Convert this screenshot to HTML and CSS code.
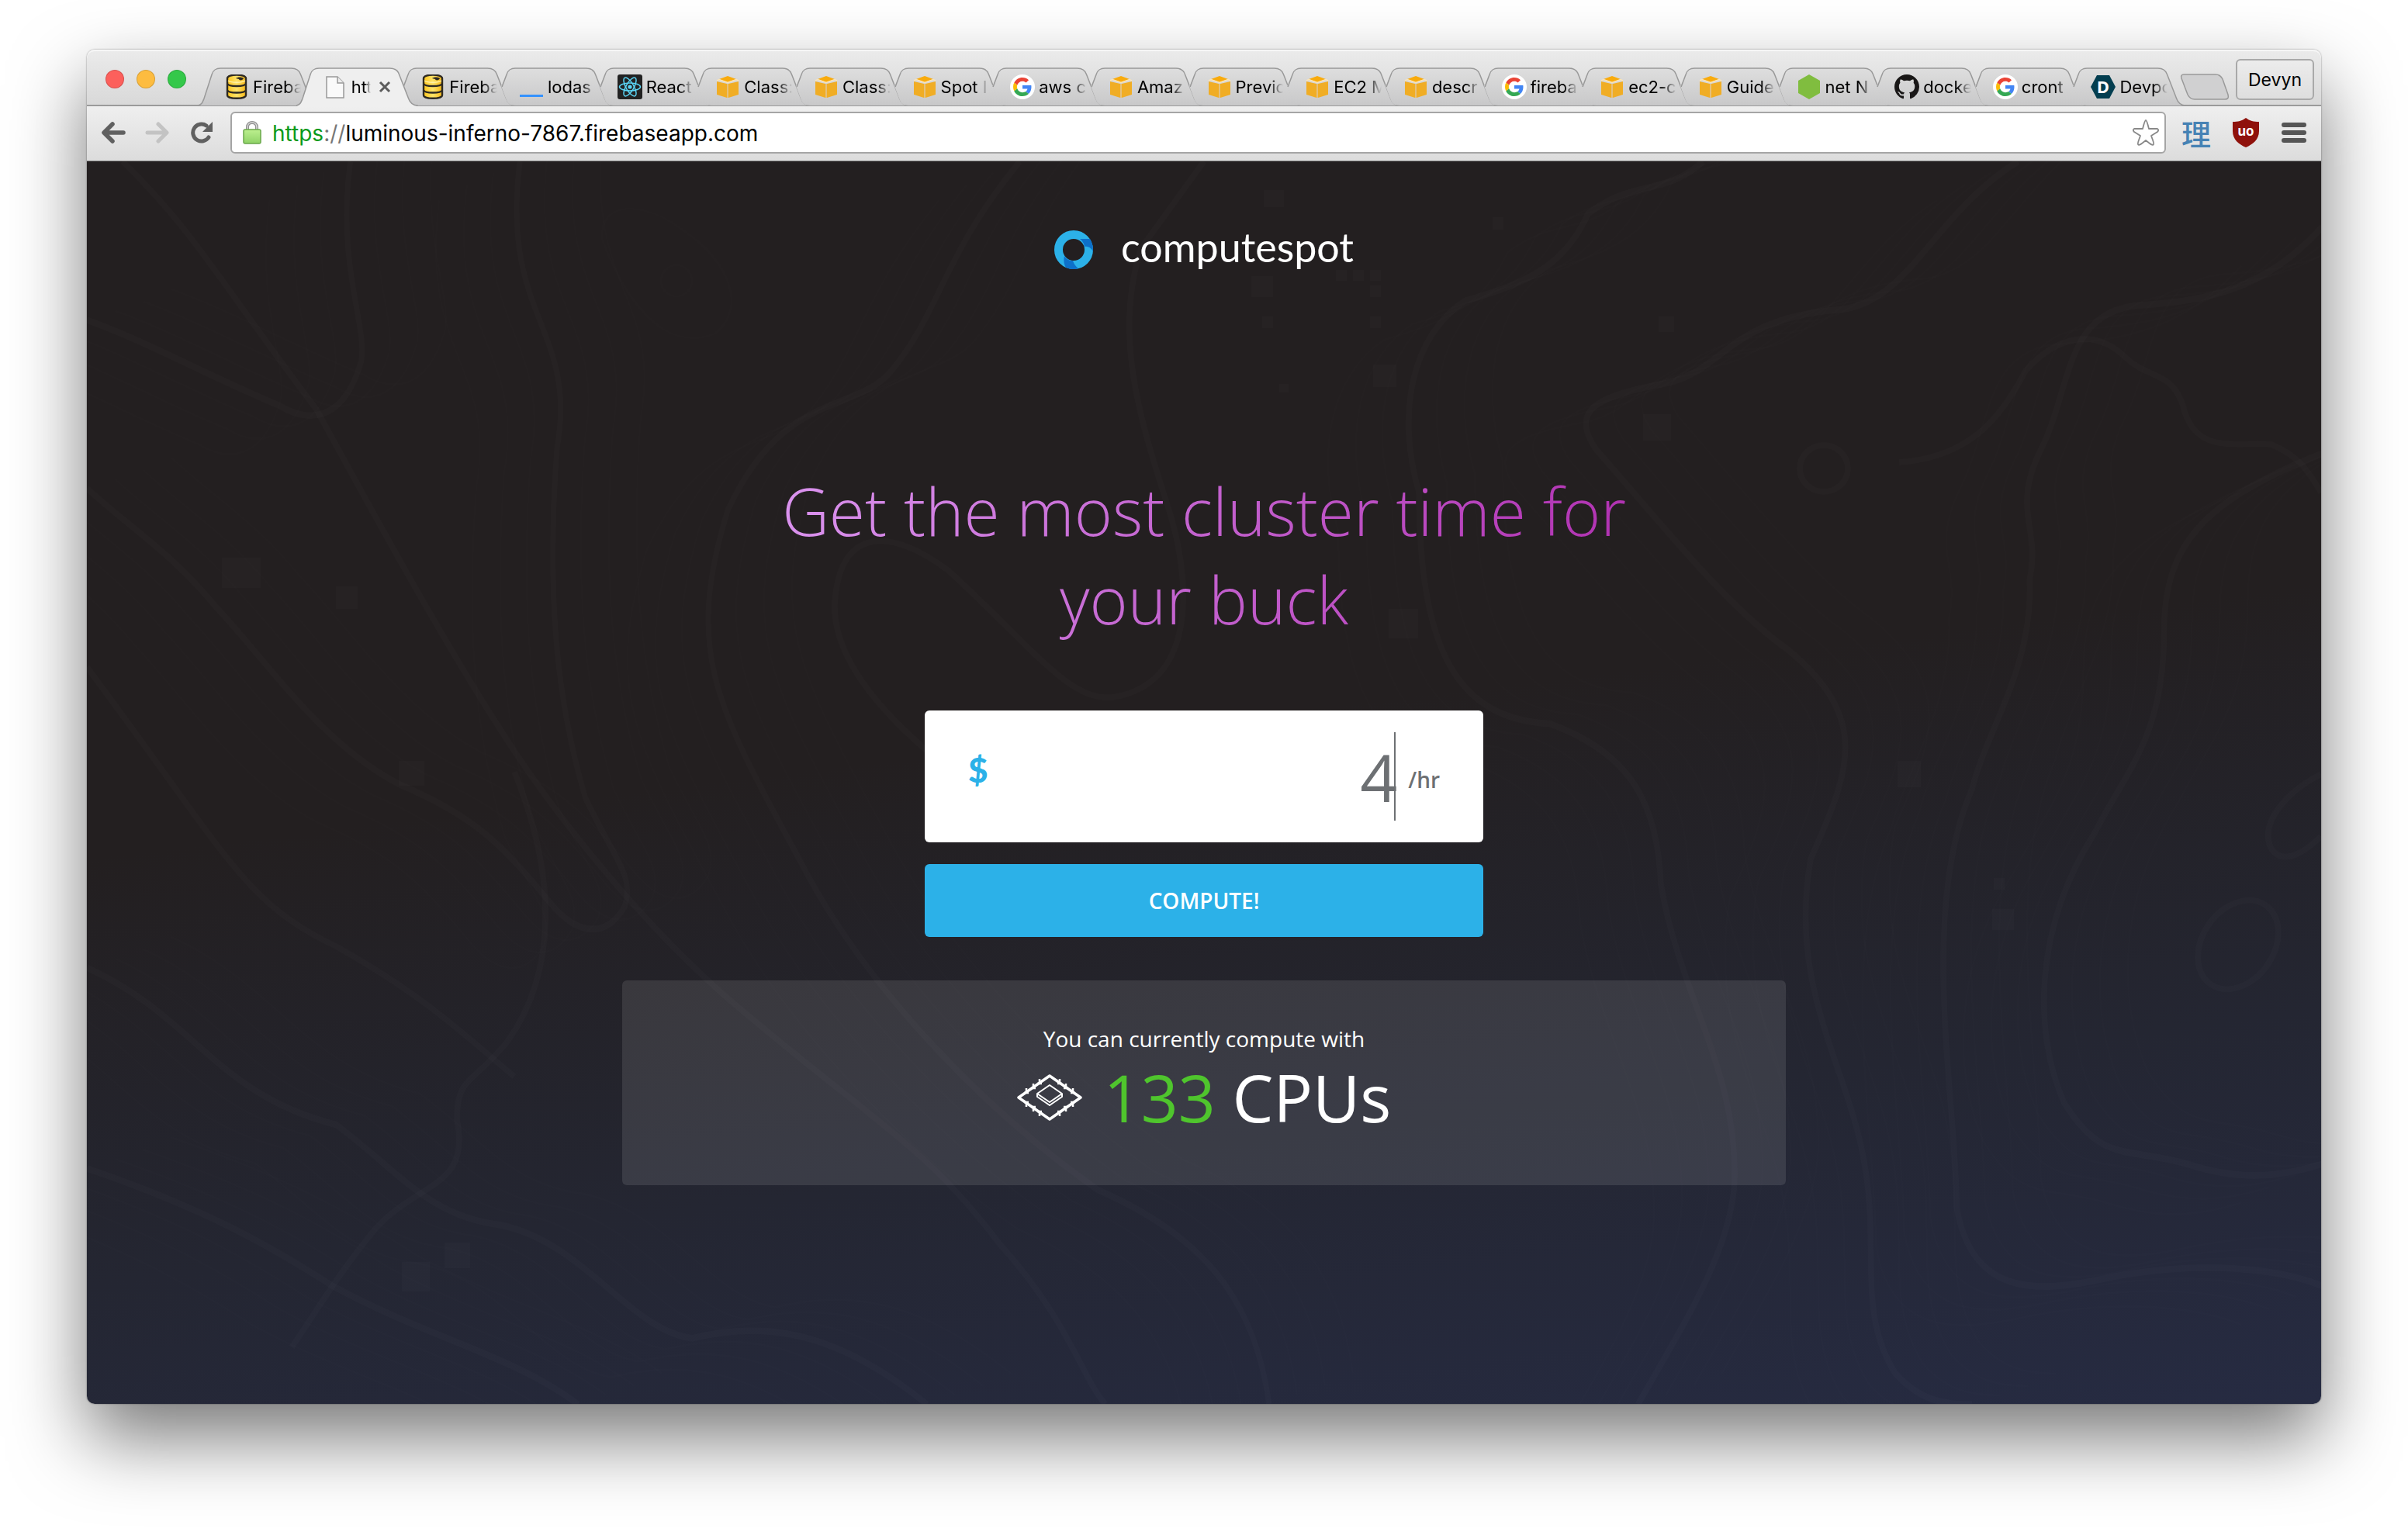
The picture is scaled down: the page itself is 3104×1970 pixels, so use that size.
FILE: index.html
```
<!DOCTYPE html>
<html lang="en">
<head>
    <meta charset="UTF-8">
    <meta name="viewport" content="width=device-width, initial-scale=1.0">
    <title>computespot</title>
    <link rel="stylesheet" href="styles.css">
</head>
<body>

<!-- Shared icons -->
<svg class="defs" aria-hidden="true">
    <defs>
        <linearGradient id="tabFill" x1="0" y1="0" x2="0" y2="1">
            <stop offset="0" stop-color="#dedede"/><stop offset="1" stop-color="#c8c8c9"/>
        </linearGradient>
        <linearGradient id="gold" x1="0" y1="0" x2="1" y2="0">
            <stop offset="0" stop-color="#ffc61c"/><stop offset=".5" stop-color="#ffe36a"/><stop offset="1" stop-color="#f7b917"/>
        </linearGradient>
        <linearGradient id="lockFill" x1="0" y1="0" x2="0" y2="1">
            <stop offset="0" stop-color="#bdf08f"/><stop offset="1" stop-color="#8fd267"/>
        </linearGradient>
    </defs>
    <symbol id="tab-first" viewBox="0 0 158 50" preserveAspectRatio="none">
        <path d="M0 49C5 48 6 45 8 40L18 9C20 3 23 1 29 1H120C126 1 130 3 132 9L144 40C146 46 150 49 156 49Z" fill="url(#tabFill)"/>
        <path d="M0 49C5 48 6 45 8 40L18 9C20 3 23 1 29 1H120C126 1 130 3 132 9L144 40C146 46 150 49 156 49" fill="none" stroke="#999" stroke-width="1.5"/>
    </symbol>
    <symbol id="tab-active" viewBox="0 0 158 50" preserveAspectRatio="none">
        <path d="M0 50C5 48 6 45 8 40L18 9C20 3 23 1 29 1H120C126 1 130 3 132 9L144 40C146 46 150 49 156 50Z" fill="#efefef"/>
        <path d="M0 49C5 48 6 45 8 40L18 9C20 3 23 1 29 1H120C126 1 130 3 132 9L144 40C146 46 150 49 156 49" fill="none" stroke="#999" stroke-width="1.5"/>
    </symbol>
    <!-- left foot is tucked under the previous tab -->
    <symbol id="tab-back" viewBox="0 0 158 50" preserveAspectRatio="none">
        <path d="M29 49C22 49 19 46 17 40L11 24L18 9C20 3 23 1 29 1H120C126 1 130 3 132 9L144 40C146 46 150 49 156 49Z" fill="url(#tabFill)"/>
        <path d="M12 25L18 9C20 3 23 1 29 1H120C126 1 130 3 132 9L144 40C146 46 150 49 156 49" fill="none" stroke="#999" stroke-width="1.5"/>
    </symbol>
    <symbol id="firebase" viewBox="0 0 32 32">
        <path d="M4 5V27C4 32 28 32 28 27V5C28 -1 4 -1 4 5Z" fill="url(#gold)" stroke="#2e2a22" stroke-width="2.4"/>
        <path d="M4 12C6 16 26 16 28 12M4 20.500C6 24.500 26 24.500 28 20.500" fill="none" stroke="#2e2a22" stroke-width="2.400"/>
        <path d="M15 5C17 3 23 3 25 5C24 8 19 8 19 6Z" fill="#2e2a22"/>
        <path d="M5 8C9 11 23 11 27 8" fill="none" stroke="#fff1a8" stroke-width="1.500"/>
    </symbol>
    <symbol id="aws" viewBox="0 0 32 32">
        <path d="M2 9L15 12V30L2 26ZM30 9L17 12V30L30 26Z" fill="#f0ad25"/>
        <path d="M15 12H17V30H15Z" fill="#e5c07c"/>
        <path d="M5 6L16 2L27 6L16 10Z" fill="#f9ab0c"/>
        <path d="M2 8L5 6.500L16 10.500L27 6.500L30 8" fill="none" stroke="#fde5b4" stroke-width="1.500"/>
    </symbol>
    <symbol id="google" viewBox="0 0 64 64">
        <circle cx="32" cy="32" r="32" fill="#fff"/>
        <g transform="translate(8 8)">
            <path fill="#EA4335" d="M24 9.500c3.540 0 6.710 1.220 9.210 3.600l6.850-6.850C35.900 2.380 30.470 0 24 0 14.620 0 6.510 5.380 2.560 13.220l7.980 6.190C12.430 13.720 17.740 9.500 24 9.500z"/>
            <path fill="#4285F4" d="M46.980 24.550c0-1.570-.15-3.090-.38-4.550H24v9.020h12.940c-.58 2.960-2.260 5.480-4.780 7.180l7.730 6c4.510-4.180 7.090-10.360 7.090-17.650z"/>
            <path fill="#FBBC05" d="M10.530 28.590c-.48-1.450-.76-2.990-.76-4.590s.27-3.140.76-4.590l-7.980-6.190C.92 16.460 0 20.120 0 24c0 3.880.92 7.540 2.560 10.780l7.970-6.190z"/>
            <path fill="#34A853" d="M24 48c6.480 0 11.930-2.130 15.890-5.810l-7.730-6c-2.150 1.450-4.920 2.300-8.160 2.300-6.260 0-11.570-4.220-13.470-9.910l-7.980 6.190C6.510 42.620 14.620 48 24 48z"/>
        </g>
    </symbol>
    <symbol id="react" viewBox="0 0 32 32">
        <rect width="32" height="32" rx="3" fill="#222"/>
        <g fill="none" stroke="#5bd5f5" stroke-width="1.500">
            <ellipse cx="16" cy="16" rx="13.500" ry="5"/>
            <ellipse cx="16" cy="16" rx="13.500" ry="5" transform="rotate(60 16 16)"/>
            <ellipse cx="16" cy="16" rx="13.500" ry="5" transform="rotate(120 16 16)"/>
        </g>
        <circle cx="16" cy="16" r="2.600" fill="#5bd5f5"/>
    </symbol>
    <symbol id="lodash" viewBox="0 0 32 32"><path d="M1 26H31V29H1Z" fill="#3492ff"/></symbol>
    <symbol id="node" viewBox="0 0 32 32"><path d="M16 0L30 8V24L16 32L2 24V8Z" fill="#80bd3f"/></symbol>
    <symbol id="github" viewBox="0 0 16 16">
        <path fill="#191717" d="M8 0C3.580 0 0 3.580 0 8c0 3.540 2.290 6.530 5.470 7.590.4.070.55-.17.55-.38 0-.19-.01-.82-.01-1.490-2.010.37-2.530-.49-2.690-.94-.09-.23-.48-.94-.82-1.130-.28-.15-.68-.52-.01-.53.63-.01 1.080.58 1.230.82.72 1.210 1.870.87 2.330.66.07-.52.28-.87.51-1.070-1.780-.2-3.640-.89-3.640-3.950 0-.87.31-1.590.82-2.150-.08-.2-.36-1.020.08-2.120 0 0 .67-.21 2.200.82.64-.18 1.320-.27 2-.27s1.360.09 2 .27c1.530-1.040 2.200-.82 2.200-.82.44 1.100.16 1.920.08 2.120.51.56.82 1.270.82 2.150 0 3.070-1.870 3.750-3.650 3.950.29.25.54.73.54 1.480 0 1.070-.01 1.930-.01 2.200 0 .21.15.46.55.38A8.010 8.010 0 0 0 16 8c0-4.420-3.580-8-8-8z"/>
    </symbol>
    <symbol id="blank" viewBox="0 0 32 32">
        <path d="M5 3H19L27 11V30H5Z" fill="#fafafa" stroke="#999" stroke-width="1.500"/>
        <path d="M19 3V11H27" fill="#eee" stroke="#999" stroke-width="1.500"/>
    </symbol>
</svg>

<div class="window">
    <div class="titlebar">
        <div class="lights">
            <button type="button" class="light red" aria-label="Close"></button>
            <button type="button" class="light yellow" aria-label="Minimize"></button>
            <button type="button" class="light green" aria-label="Zoom"></button>
        </div>
        <div class="tabs">
            <a href="#" class="tab"><svg class="shape"><use href="#tab-first"/></svg><svg class="favicon"><use href="#firebase"/></svg><span class="name">Fireba</span></a>
            <a href="#" class="tab active"><svg class="shape"><use href="#tab-active"/></svg><svg class="favicon"><use href="#blank"/></svg><span class="name">htt</span><svg class="close" viewBox="0 0 16 16"><path d="M2 2L14 14M14 2L2 14"/></svg></a>
            <a href="#" class="tab"><svg class="shape"><use href="#tab-back"/></svg><svg class="favicon"><use href="#firebase"/></svg><span class="name">Fireba</span></a>
            <a href="#" class="tab"><svg class="shape"><use href="#tab-back"/></svg><svg class="favicon"><use href="#lodash"/></svg><span class="name">lodas</span></a>
            <a href="#" class="tab"><svg class="shape"><use href="#tab-back"/></svg><svg class="favicon"><use href="#react"/></svg><span class="name">React</span></a>
            <a href="#" class="tab"><svg class="shape"><use href="#tab-back"/></svg><svg class="favicon"><use href="#aws"/></svg><span class="name">Class:</span></a>
            <a href="#" class="tab"><svg class="shape"><use href="#tab-back"/></svg><svg class="favicon"><use href="#aws"/></svg><span class="name">Class:</span></a>
            <a href="#" class="tab"><svg class="shape"><use href="#tab-back"/></svg><svg class="favicon"><use href="#aws"/></svg><span class="name">Spot I</span></a>
            <a href="#" class="tab"><svg class="shape"><use href="#tab-back"/></svg><svg class="favicon"><use href="#google"/></svg><span class="name">aws c</span></a>
            <a href="#" class="tab"><svg class="shape"><use href="#tab-back"/></svg><svg class="favicon"><use href="#aws"/></svg><span class="name">Amaz</span></a>
            <a href="#" class="tab"><svg class="shape"><use href="#tab-back"/></svg><svg class="favicon"><use href="#aws"/></svg><span class="name">Previc</span></a>
            <a href="#" class="tab"><svg class="shape"><use href="#tab-back"/></svg><svg class="favicon"><use href="#aws"/></svg><span class="name">EC2 M</span></a>
            <a href="#" class="tab"><svg class="shape"><use href="#tab-back"/></svg><svg class="favicon"><use href="#aws"/></svg><span class="name">descr</span></a>
            <a href="#" class="tab"><svg class="shape"><use href="#tab-back"/></svg><svg class="favicon"><use href="#google"/></svg><span class="name">fireba</span></a>
            <a href="#" class="tab"><svg class="shape"><use href="#tab-back"/></svg><svg class="favicon"><use href="#aws"/></svg><span class="name">ec2-c</span></a>
            <a href="#" class="tab"><svg class="shape"><use href="#tab-back"/></svg><svg class="favicon"><use href="#aws"/></svg><span class="name">Guide</span></a>
            <a href="#" class="tab"><svg class="shape"><use href="#tab-back"/></svg><svg class="favicon"><use href="#node"/></svg><span class="name">net N</span></a>
            <a href="#" class="tab"><svg class="shape"><use href="#tab-back"/></svg><svg class="favicon"><use href="#github"/></svg><span class="name">docke</span></a>
            <a href="#" class="tab"><svg class="shape"><use href="#tab-back"/></svg><svg class="favicon"><use href="#google"/></svg><span class="name">cront</span></a>
            <a href="#" class="tab"><svg class="shape"><use href="#tab-back"/></svg><svg class="favicon" viewBox="0 0 32 32"><path d="M8 1H24L32 16L24 31H8L0 16Z" fill="#033e50"/><text x="16" y="24" class="devpost-letter">D</text></svg><span class="name">Devpo</span></a>
        </div>
        <button type="button" class="new-tab" aria-label="New tab">
            <svg viewBox="0 0 64 34"><path d="M5 1H46C51 1 53 3 55 7L62 27C63 31 62 33 58 33H19C14 33 12 31 10 27L2 6C1 3 2 1 5 1Z" fill="#d0d0d1" stroke="#999" stroke-width="1.500"/></svg>
        </button>
        <button type="button" class="profile">Devyn</button>
    </div>

    <div class="toolbar">
        <button type="button" class="tool" aria-label="Back">
            <svg viewBox="0 0 32 28"><path d="M29 14H5M15 3L4 14L15 25" fill="none" stroke="#606060" stroke-width="5.500" stroke-linecap="round" stroke-linejoin="round"/></svg>
        </button>
        <button type="button" class="tool" aria-label="Forward">
            <svg viewBox="0 0 32 28"><path d="M3 14H27M17 3L28 14L17 25" fill="none" stroke="#c3c3c3" stroke-width="5" stroke-linecap="round" stroke-linejoin="round"/></svg>
        </button>
        <button type="button" class="tool reload" aria-label="Reload">
            <svg viewBox="0 0 32 28"><path d="M25 20A11 11 0 1 1 22 5" fill="none" stroke="#606060" stroke-width="5" stroke-linecap="round"/><path d="M30 0V13H17Z" fill="#606060"/></svg>
        </button>
        <div class="omnibox">
            <svg class="lock" viewBox="0 0 24 30">
                <path d="M6 12V8C6 0 18 0 18 8V12" fill="none" stroke="#8f8f8f" stroke-width="4"/>
                <path d="M6 12V8C6 0 18 0 18 8V12" fill="none" stroke="#dcdcdc" stroke-width="1.500"/>
                <rect x="1" y="11" width="22" height="18" rx="2" fill="url(#lockFill)" stroke="#6aa84a" stroke-width="1.500"/>
            </svg>
            <div class="url" role="textbox" aria-label="Address"><span class="secure">https</span><span class="slashes">://</span>luminous-inferno-7867.firebaseapp.com</div>
            <button type="button" class="star" aria-label="Bookmark">
                <svg viewBox="0 0 36 36"><path d="M18 2C19 2 20 5 22 13H33C35 14 34 16 33 17L25 22C27 28 29 32 28 33C27 35 24 33 18 28C12 33 9 35 8 33C7 32 9 28 11 22L3 17C2 16 1 14 3 13H14C16 5 17 2 18 2Z" fill="none" stroke="#888" stroke-width="1.800" stroke-linejoin="round"/></svg>
            </button>
        </div>
        <button type="button" class="extension rikai" lang="zh">理</button>
        <button type="button" class="extension" aria-label="uBlock">
            <svg viewBox="0 0 34 38"><path d="M17 0C22 4 27 5 34 5V17C34 28 26 34 17 38C8 34 0 28 0 17V5C7 5 12 4 17 0Z" fill="#8f110b"/><text x="17" y="23" class="ublock-letters">uo</text></svg>
        </button>
        <button type="button" class="extension" aria-label="Menu">
            <svg viewBox="0 0 34 38"><path d="M4 9H30M4 19H30M4 29H30" stroke="#555" stroke-width="6" stroke-linecap="round"/></svg>
        </button>
    </div>

    <div class="page">
        <!-- Topographic backdrop -->
        <svg class="contours" viewBox="0 0 2880 1602" preserveAspectRatio="none" aria-hidden="true">
            <defs>
                <g id="ridges">
                    <g transform="scale(.918 1.124)">
                        <path d="M370 0C350 120 395 190 385 230C360 300 310 300 270 280C180 250 80 205 0 182"/>
                        <path d="M608 0C580 180 690 190 660 330C645 500 660 620 700 730C740 800 770 820 755 855C730 890 690 890 650 850C580 780 540 750 440 715C330 670 250 570 180 510C120 450 60 420 0 375"/>
                        <path d="M0 925C150 980 180 1070 350 1105C440 1160 480 1210 580 1220C700 1240 760 1340 850 1350C950 1330 1050 1340 1180 1426"/>
                        <path d="M0 1155C160 1200 250 1240 345 1290C480 1350 600 1370 690 1426"/>
                        <path d="M1310 0C1200 110 1200 170 1130 240C1080 290 980 260 900 400C840 560 880 620 1000 800C1100 960 1280 1100 1420 1180C1560 1230 1640 1300 1660 1426"/>
                    </g>
                    <g transform="translate(1440) scale(.99 1.124)">
                        <path d="M650 0C600 40 560 20 500 60C470 120 420 140 340 160C270 200 250 290 280 380C280 560 330 640 450 645C560 680 590 740 595 830C620 960 700 1050 690 1180C680 1260 620 1340 565 1426"/>
                        <path d="M1060 0C950 60 920 160 830 170C680 180 680 240 600 255C500 270 480 290 510 330C600 420 680 510 760 560C870 640 840 700 790 800C760 950 840 1040 860 1150C880 1250 850 1320 900 1390C930 1420 960 1426 1000 1426"/>
                        <path d="M1456 75C1380 150 1300 160 1220 165C1120 170 1130 260 1090 330C1050 400 1090 420 1075 480C1080 580 1020 650 1000 720C930 860 980 1080 980 1200C1000 1300 1080 1300 1180 1280C1300 1260 1400 1270 1456 1290"/>
                        <path d="M1456 335C1300 390 1250 440 1250 540C1250 660 1200 700 1160 770C1080 880 1080 1000 1120 1080C1170 1150 1200 1130 1280 1150C1350 1170 1400 1165 1456 1150"/>
                    </g>
                </g>
            </defs>
            <g class="thick">
                <use href="#ridges"/>
                <path d="M46 0C138 90 165 146 296 320C367 450 459 618 532 731C588 820 698 967 826 1079C1010 1236 1083 1270 1175 1394C1267 1495 1285 1574 1313 1602"/>
                <path d="M551 787C606 922 606 1045 542 1135C496 1191 477 1180 477 1236C496 1326 422 1315 367 1382C321 1439 303 1472 264 1529"/>
                <path d="M0 652C184 899 202 955 321 1012C441 1079 496 1135 551 1180"/>
                <path d="M1240 870C1120 800 960 680 964 570C970 470 1037 472 1111 528C1221 629 1267 697 1322 691C1432 674 1423 540 1395 450C1359 337 1322 225 1359 112L1440 0"/>
                <path d="M2336 388C2430 382 2470 326 2499 270C2539 225 2588 214 2628 253C2658 281 2687 270 2702 315C2717 382 2777 360 2816 365C2856 382 2866 405 2880 427"/>
                <ellipse cx="2239" cy="396" rx="31" ry="30"/>
                <ellipse cx="2773" cy="1010" rx="46" ry="62" transform="rotate(35 2773 1010)"/>
                <path d="M2880 790C2840 810 2800 850 2815 885C2830 910 2860 890 2880 870"/>
            </g>
            <g class="thin">
                <use href="#ridges" x="36" y="-12"/>
                <use href="#ridges" x="72" y="-24"/>
                <use href="#ridges" x="108" y="-40"/>
                <use href="#ridges" x="-34" y="14"/>
                <use href="#ridges" x="-68" y="30"/>
                <use href="#ridges" x="-104" y="50"/>
                <ellipse cx="760" cy="154" rx="20" ry="20"/>
                <path d="M664 100C660 50 720 50 770 90C830 130 850 190 810 222C740 250 690 170 664 100Z"/>
            </g>
            <g class="blocks">
                <path d="M174 511h50v39h-50zM321 548h28v29h-28zM402 773h33v32h-33zM406 1419h36v38h-36zM461 1394h33v33h-33z"/>
                <path d="M1517 37h26v22h-26zM1501 148h28v27h-28zM1515 200h14v15h-14zM1610 140h14v14h-14zM1632 140h14v14h-14zM1654 140h14v14h-14zM1654 160h14v15h-14zM1654 200h14v15h-14zM1658 262h30v29h-30zM1537 287h12v11h-12z"/>
                <path d="M2006 326h36v34h-36zM2026 200h20v20h-20zM1812 72h14v16h-14zM1678 577h38v38h-38zM2334 773h30v34h-30zM2456 964h28v27h-28zM2458 924h14v15h-14z"/>
            </g>
        </svg>

        <a href="#" class="logo">
            <svg viewBox="0 0 50 50">
                <circle cx="25" cy="25" r="19.500" fill="none" stroke="#2cb1e8" stroke-width="11"/>
                <path d="M33 11H46C49 16 50 20 50 27C47 22 43 20 39 21C38 16 36 13 33 11Z" fill="#0d70c9"/>
                <path d="M13 33C15 37 19 39 24 39C25 43 28 47 31 49C25 51 20 50 15 48C12 43 12 38 13 33Z" fill="#0d70c9"/>
            </svg>
            <span>computespot</span>
        </a>

        <h1>Get the most cluster time for your buck</h1>

        <form class="budget">
            <div class="price">
                <label for="rate" class="currency">$</label>
                <input type="text" id="rate" name="rate" value="4">
                <span class="caret"></span>
                <span class="unit">/hr</span>
            </div>
            <button type="button" class="compute">COMPUTE!</button>
        </form>

        <div class="result">
            <p class="note">You can currently compute with</p>
            <p class="count">
                <svg viewBox="0 0 84 60">
                    <path d="M42 2L82 30L42 58L2 30Z" fill="none" stroke="#fff" stroke-width="3.500" stroke-linejoin="round"/>
                    <path d="M12 18V24M21 12V18M29 6V12M55 6V12M63 12V18M72 18V24M12 36V42M21 42V48M29 48V54M55 48V54M63 42V48M72 36V42M9 24H15M18 18H24M26 12H32M52 12H58M60 18H66M69 24H75M9 36H15M18 42H24M26 48H32M52 48H58M60 42H66M69 36H75" stroke="#fff" stroke-width="2.500"/>
                    <path d="M42 14L58 25L42 36L26 25ZM26 25V29L42 40L58 29V25" fill="none" stroke="#fff" stroke-width="2" stroke-linejoin="round"/>
                </svg>
                <span><span class="number">133</span> CPUs</span>
            </p>
        </div>
    </div>
</div>

</body>
</html>
```
FILE: styles.css
```
* {
    box-sizing: border-box;
}
body {
    margin: 0;
    min-height: 100vh;
    padding: 64px 112px 160px;
    display: flex;
    background: #fff;
    font-family: "Open Sans", sans-serif;
}
button {
    padding: 0;
    border: 0;
    background: none;
    font: inherit;
    cursor: pointer;
}
a {
    color: inherit;
    text-decoration: none;
}
svg {
    display: block;
}
.defs {
    position: absolute;
    width: 0;
    height: 0;
}

/* Browser window */
.window {
    flex: 1;
    min-width: 0;
    display: flex;
    flex-direction: column;
    border-radius: 10px;
    box-shadow: 0 0 2px rgba(0, 0, 0, 0.5), 0 44px 96px rgba(0, 0, 0, 0.53);
}
.titlebar {
    height: 73px;
    display: flex;
    align-items: flex-end;
    padding-right: 9px;
    border-radius: 10px 10px 0 0;
    background: linear-gradient(#ebebeb, #d8d8d8);
    box-shadow: inset 0 2px 0 #f6f6f6, inset 0 -2px 0 #9a9a9a;
    font-family: Inter, sans-serif;
}
.lights {
    display: flex;
    gap: 16px;
    padding: 0 15px 23px 24px;
}
.light {
    width: 24px;
    height: 24px;
    border-radius: 50%;
    border: 1px solid rgba(0, 0, 0, 0.15);
}
.red {
    background: #fc605c;
}
.yellow {
    background: #fdbc40;
}
.green {
    background: #34c84a;
}
.tabs {
    flex: 1;
    min-width: 0;
    display: flex;
}
.tab {
    position: relative;
    flex: 1 1 0;
    min-width: 0;
    height: 50px;
    display: flex;
    align-items: center;
    gap: 5px;
    padding: 0 26px 0 34px;
    font-size: 22px;
    color: #000;
}
.tab + .tab {
    margin-left: -32px;
}
.tab.active {
    z-index: 1;
}
.shape {
    position: absolute;
    left: 0;
    top: 0;
    width: 100%;
    height: 100%;
}
.favicon {
    position: relative;
    flex: none;
    width: 32px;
    height: 32px;
}
.name {
    position: relative;
    flex: 1;
    min-width: 0;
    overflow: hidden;
    white-space: nowrap;
    -webkit-mask-image: linear-gradient(to right, #000 70%, transparent);
    mask-image: linear-gradient(to right, #000 70%, transparent);
}
.close {
    position: relative;
    flex: none;
    width: 16px;
    height: 16px;
    margin: 0 10px 0 5px;
    stroke: #5c5c5c;
    stroke-width: 3;
}
.devpost-letter {
    font: bold 22px "Open Sans", sans-serif;
    fill: #fff;
    text-anchor: middle;
}
.new-tab {
    width: 64px;
    height: 34px;
    margin: 0 8px 8px -10px;
}
.profile {
    width: 101px;
    height: 53px;
    margin-bottom: 8px;
    border: 2px solid #a9a9a9;
    border-radius: 6px;
    background: linear-gradient(#ececec, #dedede);
    font-size: 23px;
}
.toolbar {
    display: flex;
    align-items: center;
    gap: 25px;
    padding: 7px 18px 9px 18px;
    background: linear-gradient(#efefef, #dcdcdc);
    border-bottom: 1px solid #8a8a8a;
}
.tool svg {
    width: 32px;
    height: 28px;
}
.reload {
    margin-right: -4px;
}
.omnibox {
    flex: 1;
    min-width: 0;
    height: 54px;
    display: flex;
    align-items: center;
    padding: 0 6px 0 14px;
    border: 2px solid #a5a5a5;
    border-radius: 6px;
    background: #fff;
}
.lock {
    width: 24px;
    height: 30px;
    margin-right: 14px;
}
.url {
    flex: 1;
    padding-top: 2px;
    font: 28px Inter, sans-serif;
    color: #000;
}
.secure {
    color: #0a9a1b;
}
.slashes {
    color: #777;
}
.star svg {
    width: 36px;
    height: 36px;
}
.extension {
    margin-left: -5px;
}
.extension + .extension {
    margin-left: 3px;
}
.extension svg {
    width: 34px;
    height: 38px;
}
.rikai {
    font: 500 38px/38px "Noto Sans CJK SC", sans-serif;
    color: #4682b4;
}
.ublock-letters {
    font: bold 17px Inter, sans-serif;
    fill: #fff;
    text-anchor: middle;
}

/* Page */
.page {
    position: relative;
    flex: 1;
    display: flex;
    flex-direction: column;
    align-items: center;
    padding: 84px 40px;
    overflow: hidden;
    border-radius: 0 0 10px 10px;
    background: linear-gradient(173deg, #231f20 46%, #242632 74%, #262b42);
    color: #fff;
}
.contours {
    position: absolute;
    left: 0;
    top: 0;
    width: 100%;
    height: 100%;
    fill: none;
    stroke: #fff;
}
.thick {
    stroke-width: 8;
    stroke-opacity: 0.014;
}
.thin {
    stroke-width: 3;
    stroke-opacity: 0.009;
}
.blocks {
    stroke: none;
    fill: #fff;
    fill-opacity: 0.016;
}
.logo,
h1,
.budget,
.result {
    position: relative;
}
.logo {
    display: flex;
    align-items: center;
    gap: 36px;
    font: 52px/52px Lato, sans-serif;
}
.logo span {
    padding-bottom: 8px;
}
.logo svg {
    width: 50px;
    height: 50px;
}
h1 {
    max-width: 1100px;
    margin: 250px 0 86px;
    font-size: 84px;
    line-height: 114px;
    font-weight: 300;
    text-align: center;
    background: linear-gradient(100deg, #db94ef, #c566d1 45%, #b02fb0);
    -webkit-background-clip: text;
    background-clip: text;
    color: transparent;
}
.budget {
    width: 100%;
    max-width: 720px;
    display: flex;
    flex-direction: column;
    gap: 28px;
}
.price {
    display: flex;
    align-items: center;
    padding: 28px 56px;
    border-radius: 6px;
    background: #fff;
    color: #6d7073;
}
.currency {
    align-self: flex-start;
    font: 900 44px/96px Lato, sans-serif;
    color: #2cb1e8;
}
.price input {
    flex: 1;
    min-width: 0;
    height: 114px;
    padding: 0;
    border: 0;
    outline: 0;
    background: none;
    font: 84px "Open Sans", sans-serif;
    color: inherit;
    text-align: right;
}
.caret {
    width: 2px;
    height: 114px;
    margin: 0 16px 0 -4px;
    background: #6d7073;
}
.unit {
    padding-top: 8px;
    font-size: 28px;
    line-height: 38px;
    font-weight: 600;
}
.compute {
    padding: 28px;
    border-radius: 6px;
    background: #2cb1e8;
    color: #fff;
    font-size: 28px;
    line-height: 38px;
    font-weight: 600;
}
.result {
    width: 100%;
    max-width: 1500px;
    margin-top: 56px;
    padding: 56px;
    border-radius: 6px;
    background: rgba(255, 255, 255, 0.1);
    text-align: center;
}
.note {
    margin: 0;
    font-size: 28px;
    line-height: 38px;
}
.count {
    display: flex;
    justify-content: center;
    align-items: center;
    gap: 28px;
    margin: 0;
    font-size: 84px;
    line-height: 114px;
}
.count svg {
    width: 84px;
    height: 60px;
}
.number {
    color: #4fc52d;
}
```
